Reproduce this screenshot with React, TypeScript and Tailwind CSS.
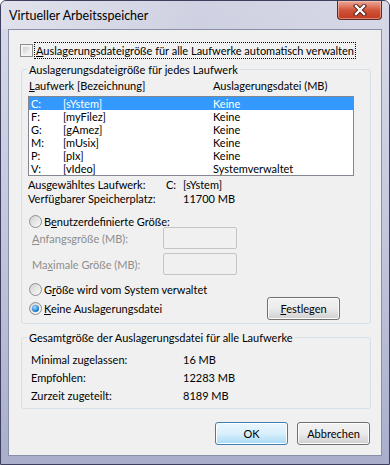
import React from 'react';

const drives = [
  { letter: 'C:', label: '[sYstem]', size: 'Keine', selected: true },
  { letter: 'F:', label: '[myFilez]', size: 'Keine' },
  { letter: 'G:', label: '[gAmez]', size: 'Keine' },
  { letter: 'M:', label: '[mUsix]', size: 'Keine' },
  { letter: 'P:', label: '[pIx]', size: 'Keine' },
  { letter: 'V:', label: '[vIdeo]', size: 'Systemverwaltet' },
];

function Checkbox() {
  return (
    <span className="w-[13px] h-[13px] shrink-0 border border-[#8e8f8f] bg-[#f4f4f4] p-[2px] flex">
      <span className="block w-full h-full bg-gradient-to-br from-[#cbcfd5] to-[#f7f7f7]" />
    </span>
  );
}

function Radio({ checked = false }: { checked?: boolean }) {
  return (
    <span className="w-[13px] h-[13px] shrink-0 rounded-full border border-[#8e8f8f] bg-gradient-to-br from-[#d2d2d2] to-[#fbfbfb] flex items-center justify-center">
      {checked && (
        <span className="w-[7px] h-[7px] rounded-full bg-[radial-gradient(circle_at_40%_35%,#a9e0ff,#2a8ad8_55%,#0d4f8f)]" />
      )}
    </span>
  );
}

function Button({ children, primary = false }: { children: React.ReactNode; primary?: boolean }) {
  return (
    <button
      className={
        primary
          ? 'w-[73px] h-[23px] rounded-[3px] border border-[#3c7fb1] bg-gradient-to-b from-[#eaf6fd] via-[#d9f0fc] to-[#a7d9f5] shadow-[inset_0_0_0_1px_#fff] text-black'
          : 'w-[73px] h-[23px] rounded-[3px] border border-[#707070] bg-gradient-to-b from-[#f2f2f2] via-[#ebebeb] to-[#cfcfcf] shadow-[inset_0_0_0_1px_#fcfcfc] text-black'
      }
    >
      {children}
    </button>
  );
}

export default function App() {
  return (
    <div className="w-[390px] h-[465px] flex flex-col rounded-t-[6px] border border-[#3e3f5e] bg-gradient-to-b from-[#d9dbe8] via-[#c3c7dc] to-[#a9aecb] font-['Lato',sans-serif] text-[11px] leading-[15px] text-black overflow-hidden whitespace-nowrap">
      {/* title bar */}
      <div className="h-[28px] flex items-start bg-gradient-to-r from-[#e4e5ee]/70 via-[#c2c5da]/40 to-[#d5d7e6]/60">
        <span className="mt-[7px] ml-[8px] text-[12.5px] text-black">Virtueller Arbeitsspeicher</span>
        <div className="ml-auto mr-[7px] w-[45px] h-[19px] rounded-b-[4px] border border-t-0 border-[#5d2a24] bg-gradient-to-b from-[#e9a898] via-[#d2553b] to-[#c0391f] shadow-[inset_0_0_0_1px_rgba(255,210,200,0.5)] flex items-center justify-center">
          <svg width="14" height="12" viewBox="0 0 14 12">
            <path d="M3 2 L11 10 M11 2 L3 10" stroke="#4a1b14" strokeWidth="4.2" strokeLinecap="square" fill="none" />
            <path d="M3 2 L11 10 M11 2 L3 10" stroke="#ffffff" strokeWidth="2.4" strokeLinecap="square" fill="none" />
          </svg>
        </div>
      </div>

      {/* client area */}
      <div className="flex-1 mx-[7px] border border-[#8a8fa8] bg-[#f0f0f0] flex flex-col">
        <div className="mt-[12px] h-[17px] flex items-center">
          <span className="ml-[11px]">
            <Checkbox />
          </span>
          <span className="ml-[1px] border border-dotted border-black px-[1px] leading-[15px]">
            <span className="underline">A</span>uslagerungsdateigröße für alle Laufwerke automatisch verwalten
          </span>
        </div>

        <fieldset className="mt-[3px] ml-[12px] w-[350px] border border-[#d5dfe5] rounded-[3px] pb-[3px]">
          <legend className="ml-[5px] px-[2px] leading-[15px]">Auslagerungsdateigröße für jedes Laufwerk</legend>
          <div className="mt-[2px] ml-[7px] flex leading-[13px]">
            <span className="w-[184px]">
              <span className="underline">L</span>aufwerk [Bezeichnung]
            </span>
            <span>Auslagerungsdatei (MB)</span>
          </div>
          <div className="mt-[4px] ml-[6px] w-[326px] h-[80px] border border-[#828790] bg-white">
            {drives.map((d) => (
              <div
                key={d.letter}
                className={`flex h-[13px] leading-[13px] ${d.selected ? 'bg-[#3399ff] text-white' : ''}`}
              >
                <span className="w-[34px] pl-[2px]">{d.letter}</span>
                <span className="w-[150px]">{d.label}</span>
                <span>{d.size}</span>
              </div>
            ))}
          </div>
          <div className="mt-[2px] ml-[6px] flex leading-[14px]">
            <span className="w-[138px]">Ausgewähltes Laufwerk:</span>
            <span className="w-[17px]">C:</span>
            <span>[sYstem]</span>
          </div>
          <div className="ml-[6px] flex leading-[14px]">
            <span className="w-[155px]">Verfügbarer Speicherplatz:</span>
            <span>11700 MB</span>
          </div>
          <div className="mt-[8px] ml-[7px] h-[14px] flex items-center gap-[2px]">
            <Radio />
            <span>
              B<span className="underline">e</span>nutzerdefinierte Größe:
            </span>
          </div>
          <div className="mt-[-1px] ml-[10px] h-[22px] flex items-center text-[#8d8d8d]">
            <span className="w-[131px]">
              <span className="underline">A</span>nfangsgröße (MB):
            </span>
            <span className="w-[74px] h-[22px] border border-[#c5c5c5] rounded-[2px] bg-[#f0f0f0]" />
          </div>
          <div className="mt-[4px] ml-[10px] h-[22px] flex items-center text-[#8d8d8d]">
            <span className="w-[131px]">
              Ma<span className="underline">x</span>imale Größe (MB):
            </span>
            <span className="w-[74px] h-[22px] border border-[#c5c5c5] rounded-[2px] bg-[#f0f0f0]" />
          </div>
          <div className="mt-[7px] ml-[7px] h-[14px] flex items-center gap-[2px]">
            <Radio />
            <span>
              G<span className="underline">r</span>öße wird vom System verwaltet
            </span>
          </div>
          <div className="mt-[1px] ml-[7px] h-[23px] flex items-center gap-[2px]">
            <Radio checked />
            <span>
              <span className="underline">K</span>eine Auslagerungsdatei
            </span>
            <span className="ml-auto mr-[30px]">
              <Button>
                <span className="underline">F</span>estlegen
              </Button>
            </span>
          </div>
        </fieldset>

        <fieldset className="mt-[6px] ml-[12px] w-[350px] border border-[#d5dfe5] rounded-[3px] pt-[5px] pb-[4px]">
          <legend className="ml-[5px] px-[2px] leading-[15px]">Gesamtgröße der Auslagerungsdatei für alle Laufwerke</legend>
          {[
            ['Minimal zugelassen:', '16 MB'],
            ['Empfohlen:', '12283 MB'],
            ['Zurzeit zugeteilt:', '8189 MB'],
          ].map(([k, v]) => (
            <div key={k} className="ml-[9px] h-[18px] flex items-center">
              <span className="w-[152px]">{k}</span>
              <span>{v}</span>
            </div>
          ))}
        </fieldset>

        <div className="mt-[13px] mr-[11px] flex justify-end gap-[9px]">
          <Button primary>OK</Button>
          <Button>Abbrechen</Button>
        </div>
      </div>

      {/* bottom frame */}
      <div className="h-[8px]" />
    </div>
  );
}
